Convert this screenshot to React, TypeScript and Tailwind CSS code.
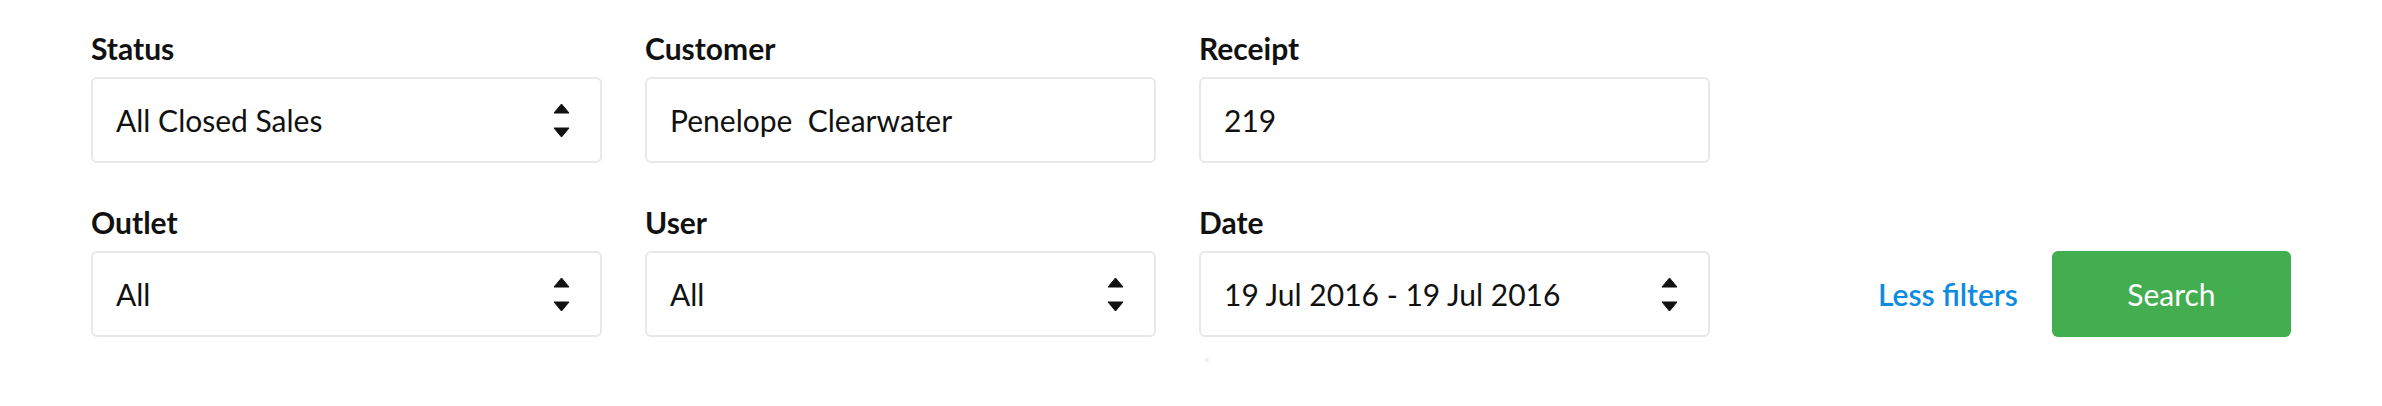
function Arrows() {
  return (
    <svg width="17" height="35" viewBox="0 0 17 35" className="shrink-0">
      <path d="M1 10 L8.5 1 L16 10 Z" fill="#111" stroke="#111" strokeWidth="1" strokeLinejoin="round" />
      <path d="M1 25 L16 25 L8.5 34 Z" fill="#111" stroke="#111" strokeWidth="1" strokeLinejoin="round" />
    </svg>
  )
}

function Field({ label, value, select }: { label: string; value: string; select?: boolean }) {
  return (
    <div className="flex flex-col">
      <label className="text-[30px] leading-[34px] font-bold text-[#111] mb-[12px]">{label}</label>
      <div className="h-[86px] flex items-center justify-between pl-[23px] pr-[30px] border-2 border-[#e8e8e8] rounded-[6px] bg-white">
        <span className="text-[30px] leading-[36px] text-[#111] whitespace-pre">{value}</span>
        {select && <Arrows />}
      </div>
    </div>
  )
}

export default function App() {
  return (
    <div className="w-[2382px] h-[406px] bg-white font-['Lato','Liberation_Sans',sans-serif] pt-[31px] pl-[91px]">
      <div className="flex flex-col gap-[42px]">
        <div className="grid grid-cols-[511px_511px_511px] gap-x-[43px]">
          <Field label="Status" value="All Closed Sales" select />
          <Field label="Customer" value="Penelope  Clearwater" />
          <Field label="Receipt" value="219" />
        </div>
        <div className="flex items-end">
          <div className="grid grid-cols-[511px_511px_511px] gap-x-[43px]">
            <Field label="Outlet" value="All" select />
            <Field label="User" value="All" select />
            <div className="relative">
              <Field label="Date" value="19 Jul 2016 - 19 Jul 2016" select />
              <div className="absolute left-[6px] -bottom-[25px] w-[4px] h-[4px] rounded-full bg-[#eeeeee]" />
            </div>
          </div>
          <div className="h-[86px] flex items-center ml-[168px] gap-[34px]">
            <a className="text-[30px] leading-[36px] font-semibold text-[#0d8ae2] cursor-pointer">Less filters</a>
            <button className="w-[239px] h-[86px] rounded-[6px] bg-[#42ae4f] text-white text-[30px] leading-[36px]">
              Search
            </button>
          </div>
        </div>
      </div>
    </div>
  )
}
